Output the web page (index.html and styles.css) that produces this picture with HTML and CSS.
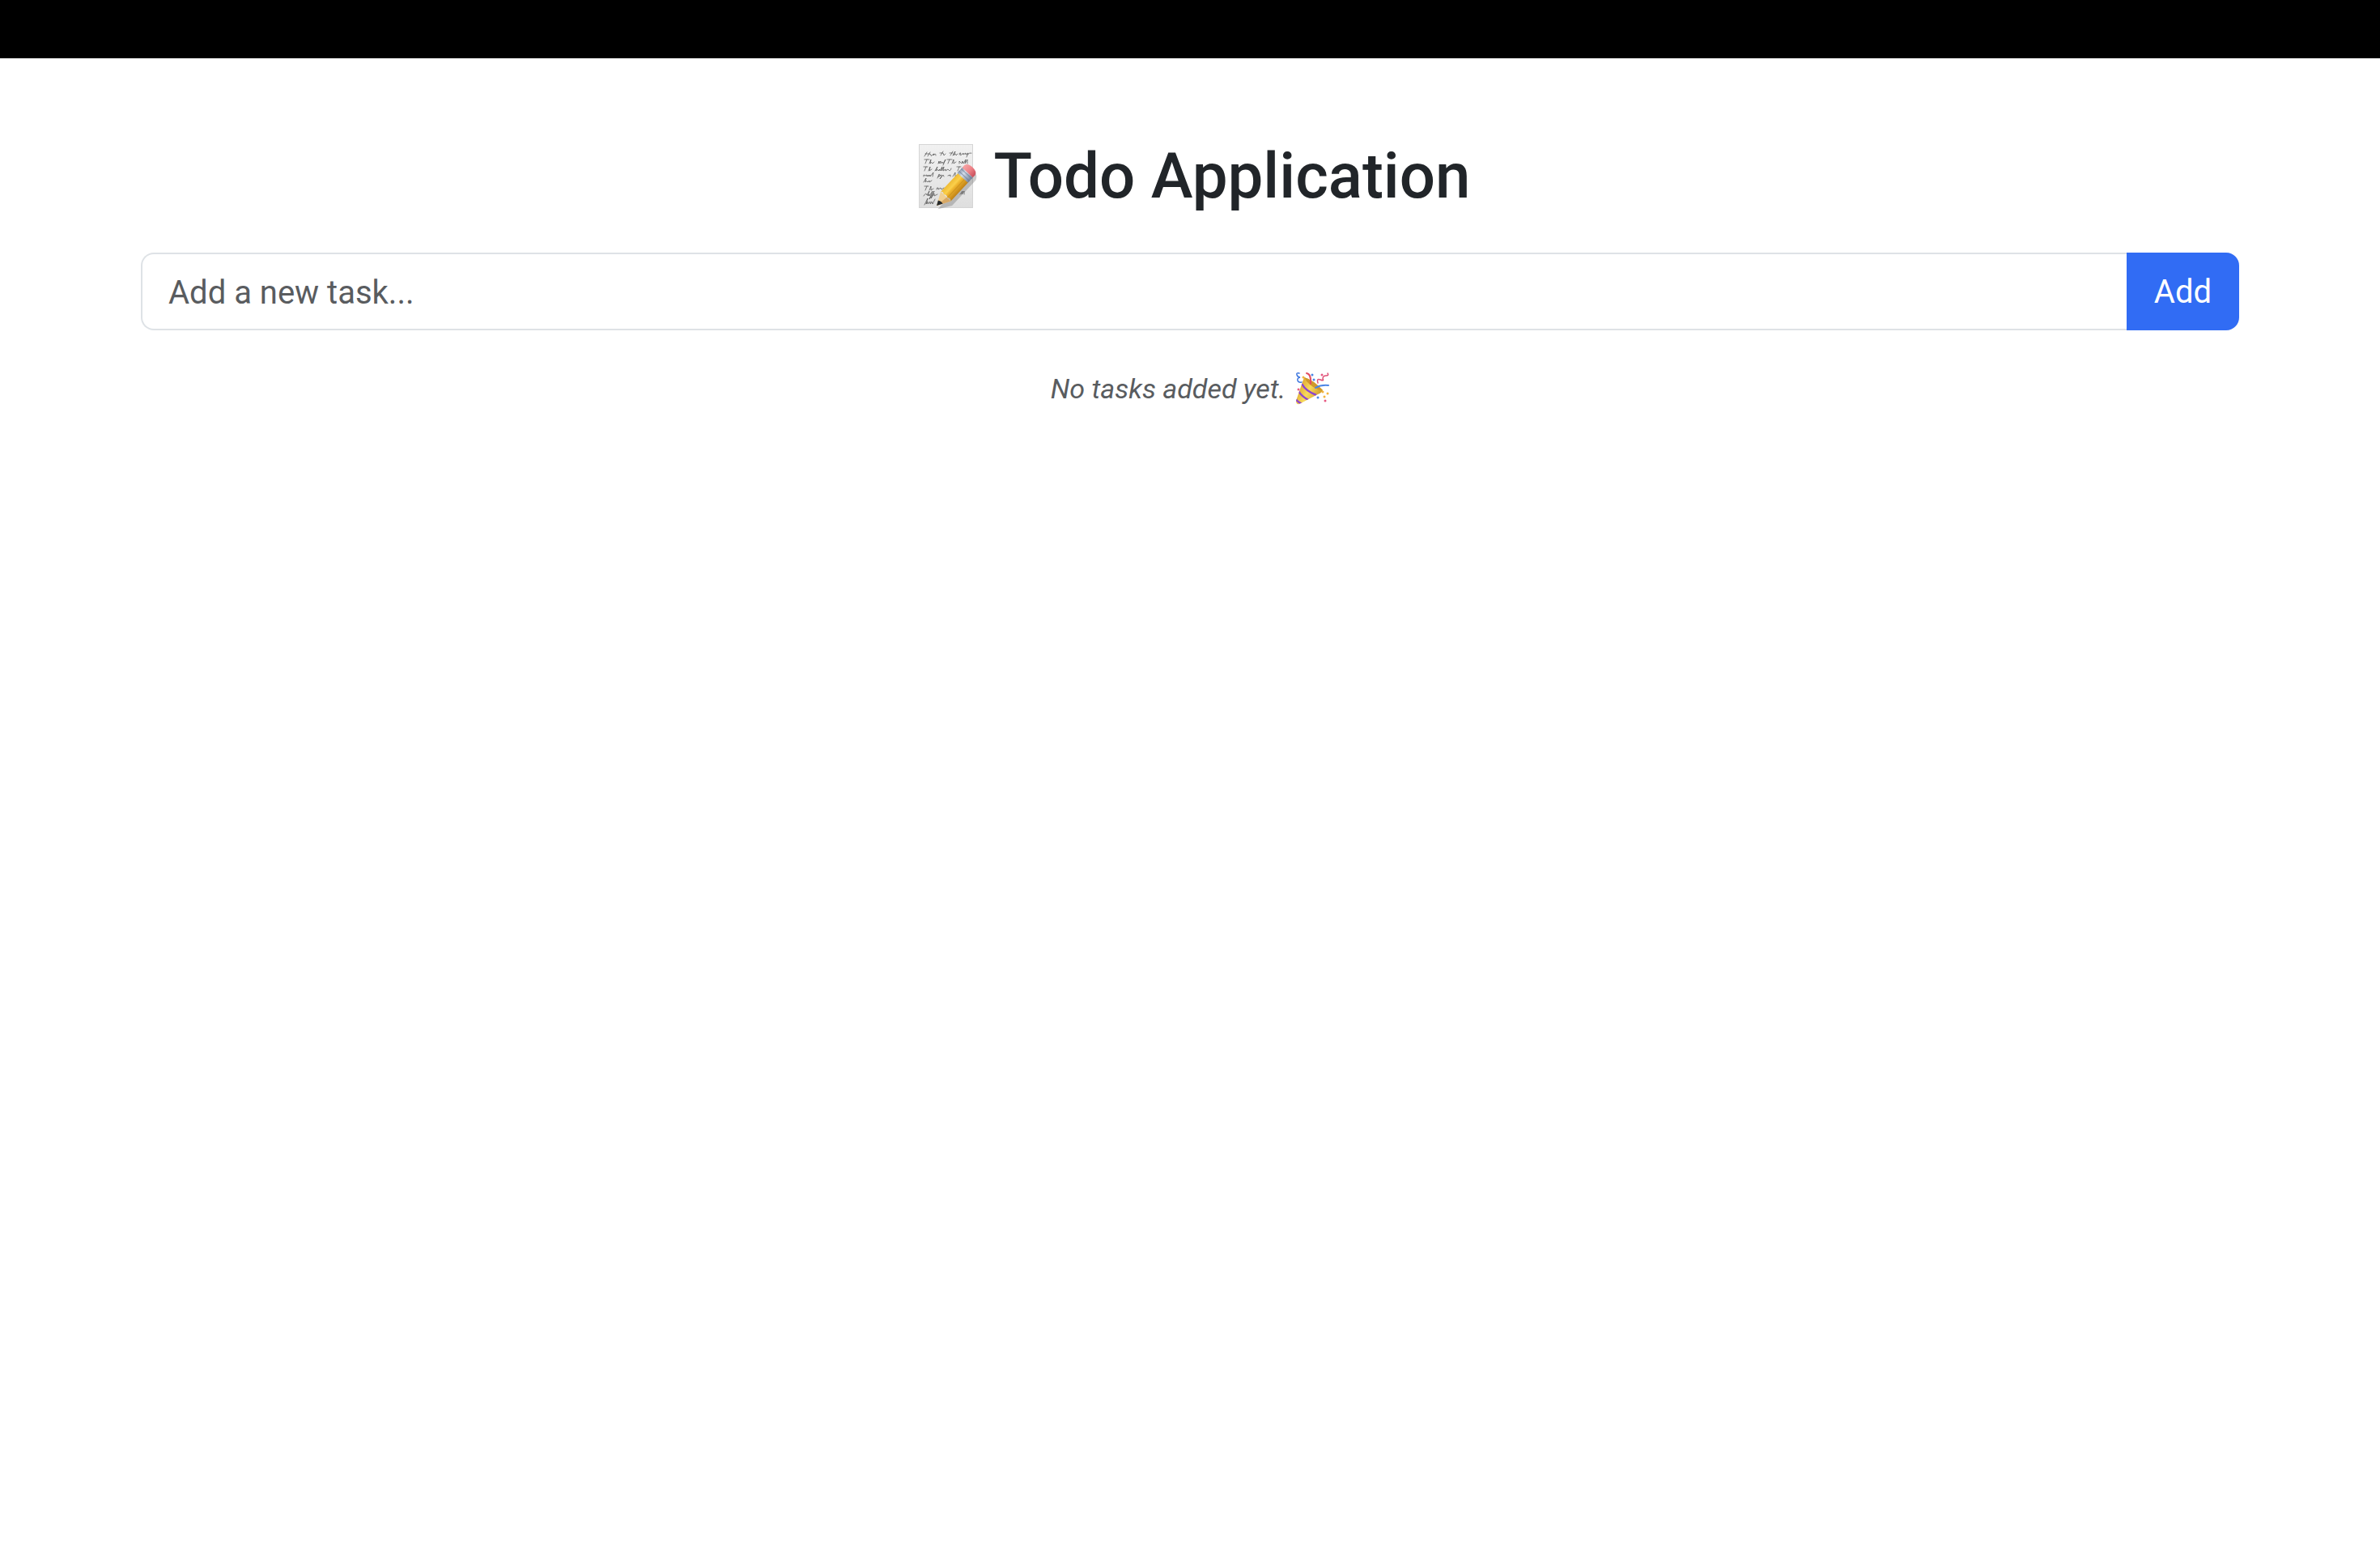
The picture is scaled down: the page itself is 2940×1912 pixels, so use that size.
FILE: index.html
```html
<!DOCTYPE html>
<html lang="en">
<head>
<meta charset="utf-8">
<meta name="viewport" content="width=device-width, initial-scale=1">
<title>Todo Application</title>
<link rel="stylesheet" href="styles.css">
</head>
<body>
<header class="topbar"></header>
<main class="container">
  <h1 class="title">
    <svg class="title-icon" viewBox="0 0 84 84" aria-hidden="true">
      <defs>
        <linearGradient id="paper" x1="0" y1="0" x2="0" y2="1"><stop offset="0" stop-color="#f1f1f1"/><stop offset=".5" stop-color="#e9e9e9"/><stop offset="1" stop-color="#dedede"/></linearGradient>
        <linearGradient id="wood" x1="0" y1="0" x2="1" y2="0"><stop offset="0" stop-color="#eebb35"/><stop offset=".35" stop-color="#fbd04b"/><stop offset=".5" stop-color="#efb52f"/><stop offset="1" stop-color="#c08216"/></linearGradient>
        <linearGradient id="metal" x1="0" y1="0" x2="1" y2="0"><stop offset="0" stop-color="#8e9db3"/><stop offset=".35" stop-color="#d3dce9"/><stop offset="1" stop-color="#75839a"/></linearGradient>
        <linearGradient id="rubber" x1="0" y1="0" x2="1" y2="0"><stop offset="0" stop-color="#f6a5a6"/><stop offset=".5" stop-color="#ee8388"/><stop offset="1" stop-color="#c94f5c"/></linearGradient>
      </defs>
      <rect x="11.500" y="2.500" width="66" height="78" fill="url(#paper)" stroke="#d5d5d5"/>
      <g fill="none" stroke="#4a4a4a" stroke-width=".7" stroke-linecap="round" stroke-linejoin="round">
        <path d="M18 17l3-5M22 17l3-5M19 14h5q2 0 2 2t2-1l2-1-1 2q3-4 3 0M38 16l3-5M37 13h4l1 3 2-2M50 16l3-5M49 13h4M53 16l3-5-2 5q3-4 3 0l2-2M61 15q0-3 2-2-2 4 1 2l2-2v2l3-2v2l3-2-2 5M71 15q3-3 5-2"/>
        <path d="M18 21h6M21 21l-2 5M24 26l2-5-1 5q2-3 3 0l2-2M35 26l1-3v3l2-3v3l2-2 1 2 3-5-3 7M46 21h6M49 21l-2 5M52 26l2-5v5l3-2M61 26v-3l3 3 1-3 1 3 3-5-1 5 3-5v5"/>
        <path d="M17 30h5M20 30l-2 5M23 35l2-5-1 5 3-2M31 35l3-5-2 5q3-3 3 0l2-2v2l3-5-1 5 3-5-1 5 3-2v2l3-2q3 4 4-1M58 30h5M61 30l-2 5M64 35l2-5v5"/>
        <path d="M17 42v-2l2 1 2-1v2l2-2v2l2-2v2l4-5-1 5M34 44l2-5q3 2-1 3l4-2v2l-2 3 4-5 1 2M47 41l3-1v2M53 42l3-5v5l2-2"/>
        <path d="M17 49l3-5-1 5q2-3 3 0l2-2v2l3-2M18 54h5M21 54l-2 5M24 59l2-5v5l3-2M33 58q0-3 2-2v2l3-2 1 2 3-2M46 58l3-2v2"/>
        <path d="M17 66q3-5 4-1l3-5-2 6 2-2v2l4-6-4 10 6-10-4 9 4-6v3l4-2M62 64l3-4-1 4 3-4v4M18 77l4-8-2 7 2-3v3l3-3v3l2-3 1 3 3-6"/>
      </g>
      <g transform="translate(33 78) rotate(43)">
        <path d="M1 1L11-14V-57Q8-64 1-64Z" fill="#555" opacity=".3" transform="translate(3 1)"/>
        <path d="M0 0L-8-16H9Z" fill="#f0cf93"/>
        <path d="M0 0L9-16H2Z" fill="#d7a865"/>
        <path d="M0 0L-3-6Q0-8 4-7Z" fill="#25292c"/>
        <path d="M-8-16V-49H9V-16Q6-19 3-16Q0-19-3-16Q-6-19-8-16Z" fill="url(#wood)"/>
        <path d="M3-17V-49" stroke="#c68b1a" opacity=".65"/>
        <rect x="-9" y="-56" width="18" height="9" fill="url(#metal)"/>
        <path d="M-9-54H9M-9-50H9" stroke="#66758d" opacity=".6"/>
        <path d="M-9-56V-60Q-8-65 0-65T9-60V-56Z" fill="url(#rubber)"/>
      </g>
    </svg>
    <span>Todo Application</span>
  </h1>
  <form class="task-form">
    <input class="task-input" type="text" placeholder="Add a new task..." aria-label="New task">
    <button class="task-button" type="button">Add</button>
  </form>
  <p class="empty">
    <em>No tasks added yet.</em>
    <svg class="empty-icon" viewBox="0 0 42 42" aria-hidden="true">
      <defs><linearGradient id="cone" x1="0" y1=".3" x2="1" y2=".8"><stop offset="0" stop-color="#d99c22"/><stop offset=".45" stop-color="#f7d95c"/><stop offset="1" stop-color="#c58c1e"/></linearGradient>
      <clipPath id="cone-clip"><path d="M11 7Q22 10 34 23Q33 26 28 28L5 40Q1 41 1 36Z"/></clipPath></defs>
      <path d="M11 7Q22 10 34 23Q33 26 28 28L5 40Q1 41 1 36Z" fill="url(#cone)"/>
      <g clip-path="url(#cone-clip)" fill="none" stroke="#8c45cf" stroke-width="2.500"><path d="M8 15Q13 24 26 29M4 24Q8 31 18 36M1 34Q3 38 9 40"/></g>
      <path d="M11 7Q22 10 34 23Q32 24 28 22Q16 17 11 7Z" fill="#d0992b"/>
      <g fill="none" stroke-linecap="round">
        <path d="M5 2Q1 1 2 4T6 7Q2 8 3 11T8 13" stroke="#3f78df" stroke-width="1.500"/>
        <path d="M14 2Q20 3 19 15" stroke="#e24e61" stroke-width="2"/>
        <path d="M25 20Q32 16 41 17" stroke="#4c86e5" stroke-width="2"/>
        <path d="M40 2Q42 5 38 5T34 9Q36 12 31 10T28 14" stroke="#df5277" stroke-width="1.500"/>
      </g>
      <g fill="#e75a83"><circle cx="33" cy="4" r="1.500"/><circle cx="4" cy="22" r="1.500"/><circle cx="37" cy="36" r="1.500"/></g>
      <g fill="#4c86e5"><circle cx="21" cy="4" r="1.500"/><circle cx="23" cy="10" r="1.500"/><circle cx="28" cy="32" r="1.500"/></g>
      <g fill="#f3b43e"><circle cx="10" cy="7" r="1.500"/><circle cx="34" cy="25" r="1.500"/><circle cx="36" cy="31" r="1.500"/><circle cx="40" cy="27" r="1.500"/></g>
    </svg>
  </p>
</main>
</body>
</html>
```
FILE: styles.css
```css
*, *::before, *::after { box-sizing: border-box; }

body {
  margin: 0;
  background: #fff;
  color: #212529;
  font-family: Roboto, "Liberation Sans", sans-serif;
  font-size: 34px;
  line-height: 48px;
}

.topbar { height: 72px; background: #000; }

.container {
  max-width: 2640px;
  margin: 96px auto 0;
  padding: 0 24px;
}

.title {
  display: flex;
  justify-content: center;
  align-items: center;
  gap: 20px;
  margin: 0 0 48px;
  padding-top: 4px;
  font-size: 78px;
  font-weight: 500;
  line-height: 92px;
}

.title-icon { flex: none; width: 84px; height: 84px; }

.task-form { display: flex; margin: 0 0 48px; }

.task-input,
.task-button {
  margin: 0;
  padding: 17px 32px 15px;
  font: inherit;
  font-size: 40px;
  line-height: 60px;
}

.task-input {
  flex: 1;
  min-width: 0;
  height: 96px;
  border: 2px solid #dee2e6;
  border-right: 0;
  border-radius: 16px 0 0 16px;
  background: #fff;
  color: #212529;
}

.task-input::placeholder { color: #595c5f; opacity: 1; }

.task-button {
  border: 2px solid #316cf4;
  border-radius: 0 16px 16px 0;
  background: #316cf4;
  color: #fff;
}

.empty {
  display: flex;
  justify-content: center;
  align-items: center;
  gap: 12px;
  margin: 0;
  color: #595c5f;
}

.empty-icon { flex: none; width: 42px; height: 42px; }
```
